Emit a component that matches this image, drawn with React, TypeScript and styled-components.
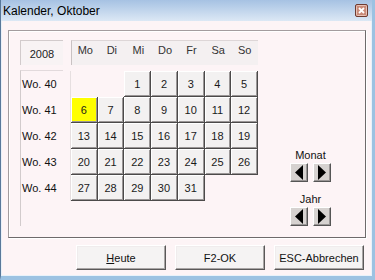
import styled, { createGlobalStyle } from 'styled-components';

const GlobalStyle = createGlobalStyle`
  html, body {
    margin: 0;
    padding: 0;
    background: #ffffff;
  }
  body {
    font-family: 'Liberation Sans', Arial, sans-serif;
  }
`;

const weeks = [40, 41, 42, 43, 44];
const dayNames = ['Mo', 'Di', 'Mi', 'Do', 'Fr', 'Sa', 'So'];
const firstOffset = 2; // Oktober 2008 beginnt am Mittwoch
const daysInMonth = 31;
const today = 6;

function buildCells() {
  const cells: (number | null)[] = [];
  for (let i = 0; i < firstOffset; i++) cells.push(null);
  for (let d = 1; d <= daysInMonth; d++) cells.push(d);
  return cells;
}

function Arrow({ dir }: { dir: 'left' | 'right' }) {
  return (
    <svg width="10" height="15" viewBox="0 0 10 15">
      {dir === 'left' ? (
        <polygon points="9,0 9,15 1,7.5" fill="#000" />
      ) : (
        <polygon points="1,0 1,15 9,7.5" fill="#000" />
      )}
    </svg>
  );
}

export default function App() {
  const cells = buildCells();

  return (
    <>
      <GlobalStyle />
      <Window>
        <TitleBar>
          <Title>Kalender, Oktober</Title>
          <CloseBtn>
            <svg width="13" height="13" viewBox="0 0 13 13">
              <rect x="0.5" y="0.5" width="12" height="12" rx="1.5" fill="#c98a78" stroke="#6e3b30" />
              <rect x="1.5" y="1.5" width="10" height="10" rx="1" fill="none" stroke="#e9c2b6" />
              <path d="M4 4 L9 9 M9 4 L4 9" stroke="#fff" strokeWidth="1.8" />
            </svg>
          </CloseBtn>
        </TitleBar>
        <Body>
          <GroupBox>
            <LeftCol>
              <YearBox>2008</YearBox>
              <WeekPanel>
                {weeks.map((w) => (
                  <WeekRow key={w}>Wo. {w}</WeekRow>
                ))}
              </WeekPanel>
            </LeftCol>
            <CalendarCol>
              <DayHeader>
                {dayNames.map((n) => (
                  <DayName key={n}>{n}</DayName>
                ))}
              </DayHeader>
              <DayGrid>
                {cells.map((d, idx) =>
                  d === null ? (
                    <EmptyCell key={idx} />
                  ) : (
                    <DayCell key={idx} $today={d === today}>
                      {d}
                    </DayCell>
                  )
                )}
              </DayGrid>
            </CalendarCol>
            <NavCol>
              <NavLabel>Monat</NavLabel>
              <NavRow>
                <NavBtn>
                  <Arrow dir="left" />
                </NavBtn>
                <NavBtn>
                  <Arrow dir="right" />
                </NavBtn>
              </NavRow>
              <NavLabel $gap>Jahr</NavLabel>
              <NavRow>
                <NavBtn>
                  <Arrow dir="left" />
                </NavBtn>
                <NavBtn>
                  <Arrow dir="right" />
                </NavBtn>
              </NavRow>
            </NavCol>
          </GroupBox>
          <ButtonRow>
            <DialogBtn>
              <u>H</u>eute
            </DialogBtn>
            <DialogBtn>F2-OK</DialogBtn>
            <DialogBtn>ESC-Abbrechen</DialogBtn>
          </ButtonRow>
        </Body>
      </Window>
    </>
  );
}

const Window = styled.div`
  width: 375px;
  height: 280px;
  box-sizing: border-box;
  display: flex;
  flex-direction: column;
  background: #fdf4f6;
  border-left: 1px solid #59789a;
  border-right: 3px solid #9cc2e2;
  border-bottom: 4px solid #9cc2e2;
  box-shadow: inset 1px 0 0 #e8f0f8, inset -1px -1px 0 #e8f2fa;
  color: #111;
  font-size: 11px;
`;

const TitleBar = styled.div`
  height: 21px;
  flex-shrink: 0;
  display: flex;
  align-items: center;
  justify-content: space-between;
  padding: 0 4px 0 2px;
  background: linear-gradient(#a6c2e3, #dce8f5);
`;

const Title = styled.div`
  font-size: 12px;
  color: #000;
  padding-top: 1px;
`;

const CloseBtn = styled.div`
  display: flex;
  width: 13px;
  height: 13px;
`;

const Body = styled.div`
  flex: 1;
  display: flex;
  flex-direction: column;
  padding: 9px 0 0 7px;
`;

const GroupBox = styled.div`
  box-sizing: border-box;
  width: 358px;
  height: 208px;
  display: flex;
  padding: 9px 0 0 11px;
  border: 1px solid #a39c9e;
  border-right-color: #6e6a6b;
  border-bottom-color: #6e6a6b;
  box-shadow: inset 1px 1px 0 #ffffff, 1px 1px 0 #ffffff;
`;

const LeftCol = styled.div`
  width: 43px;
  display: flex;
  flex-direction: column;
  gap: 5px;
`;

const YearBox = styled.div`
  box-sizing: border-box;
  height: 25px;
  display: flex;
  align-items: center;
  justify-content: center;
  padding-top: 2px;
  background: #f8f3f4;
  border-top: 1px solid #d2cbcc;
  border-left: 1px solid #d2cbcc;
  color: #222;
`;

const WeekPanel = styled.div`
  box-sizing: border-box;
  height: 156px;
  border-top: 1px solid #e2dadc;
  border-left: 1px solid #d2cbcc;
  padding-left: 1px;
`;

const WeekRow = styled.div`
  height: 26px;
  display: flex;
  align-items: center;
  color: #111;
`;

const CalendarCol = styled.div`
  width: 187px;
  margin-left: 8px;
  display: flex;
  flex-direction: column;
`;

const DayHeader = styled.div`
  box-sizing: border-box;
  height: 25px;
  display: grid;
  grid-template-columns: repeat(7, 1fr);
  background: #f4f0f1;
  border-top: 1px solid #ddd6d7;
  border-left: 1px solid #c9c2c3;
`;

const DayName = styled.div`
  display: flex;
  justify-content: center;
  padding-top: 3px;
  line-height: 13px;
  color: #333;
`;

const DayGrid = styled.div`
  margin-top: 6px;
  display: grid;
  grid-template-columns: repeat(7, 1fr);
  grid-auto-rows: 26px;
  box-shadow: -1px 0 0 #e6dfe0;
`;

const EmptyCell = styled.div``;

const DayCell = styled.div<{ $today?: boolean }>`
  box-sizing: border-box;
  display: flex;
  align-items: center;
  justify-content: center;
  padding-top: 1px;
  background: ${(p) => (p.$today ? '#ffff00' : '#f3f1f1')};
  border-right: 1px solid #4c4a4a;
  border-bottom: 1px solid #4c4a4a;
  box-shadow: inset 1px 1px 0 #ffffff, inset -1px -1px 0 #9a9696;
  color: #1a1a1a;
`;

const NavCol = styled.div`
  width: 41px;
  margin-left: 32px;
  padding-top: 109px;
  display: flex;
  flex-direction: column;
  align-items: center;
`;

const NavLabel = styled.div<{ $gap?: boolean }>`
  line-height: 13px;
  margin-top: ${(p) => (p.$gap ? '11px' : '0')};
  color: #111;
`;

const NavRow = styled.div`
  display: flex;
  gap: 5px;
  margin-top: 1px;
`;

const NavBtn = styled.div`
  box-sizing: border-box;
  width: 18px;
  height: 19px;
  display: flex;
  align-items: center;
  justify-content: center;
  background: #d6d2d0;
  border: 1px solid;
  border-color: #ffffff #555 #555 #ffffff;
  box-shadow: inset -1px -1px 0 #9a9696;
`;

const ButtonRow = styled.div`
  display: flex;
  justify-content: flex-end;
  gap: 9px;
  margin-top: 7px;
  padding-right: 8px;
`;

const DialogBtn = styled.div`
  box-sizing: border-box;
  width: 90px;
  height: 25px;
  display: flex;
  align-items: center;
  justify-content: center;
  padding-top: 1px;
  font-size: 11px;
  color: #111;
  background: #f5f3f3;
  border: 1px solid;
  border-color: #ffffff #5a5858 #5a5858 #ffffff;
  box-shadow: inset -1px -1px 0 #a9a5a5, inset 1px 1px 0 #f0eced;
`;
